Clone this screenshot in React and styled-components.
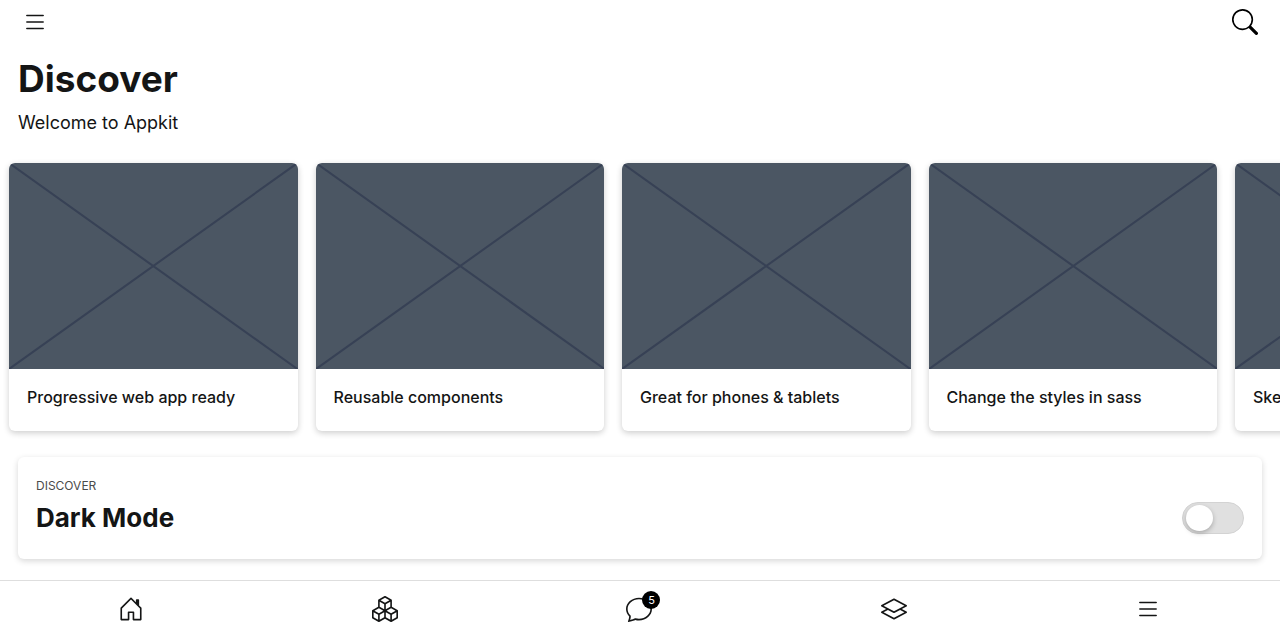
import React, { useState } from "react";
import styled, { createGlobalStyle } from "styled-components";
import { BsList, BsSearch, BsHouseDoor, BsBoxes, BsChat, BsLayers } from "react-icons/bs";

const GlobalStyle = createGlobalStyle`
  *, *::before, *::after { box-sizing: border-box; }
  body {
    margin: 0;
    background: #fff;
    color: #141515;
    font-family: Inter, "Liberation Sans", sans-serif;
  }
`;

const Page = styled.div`
  display: flex;
  flex-direction: column;
  min-height: 100vh;
`;

const Toolbar = styled.header`
  display: flex;
  align-items: center;
  justify-content: space-between;
  height: 44px;
  padding: 0 22px;
`;

const IconButton = styled.button`
  display: flex;
  padding: 0;
  border: 0;
  background: none;
  color: ${(p) => p.$color || "inherit"};
  cursor: pointer;
`;

const Intro = styled.section`
  padding: 12px 18px 0;
`;

const Title = styled.h1`
  margin: 0;
  font-size: 37px;
  line-height: 46px;
  font-weight: 700;
`;

const Subtitle = styled.p`
  margin: 8px 0 0;
  font-size: 18px;
  line-height: 26px;
`;

const Slider = styled.ul`
  display: grid;
  grid-auto-flow: column;
  grid-auto-columns: calc((100% - 72px - 45px) / 4);
  gap: 18px;
  margin: 0;
  padding: 27px 0 8px 9px;
  list-style: none;
  overflow-x: auto;
  scrollbar-width: none;
`;

const Card = styled.li`
  border-radius: 6px;
  background: #fff;
  box-shadow: 0 2px 6px rgba(0, 0, 0, 0.2);
  overflow: hidden;
`;

const Placeholder = styled.svg`
  display: block;
  width: 100%;
  aspect-ratio: 7 / 5;
  background: #4b5663;
  stroke: #374155;
  stroke-width: 2;
`;

const CardTitle = styled.h2`
  margin: 0;
  padding: 15px 18px 21px;
  font-size: 16px;
  line-height: 26px;
  font-weight: 500;
  white-space: nowrap;
`;

const Panel = styled.section`
  display: flex;
  align-items: center;
  justify-content: space-between;
  margin: 18px 18px 20px;
  padding: 18px;
  border-radius: 6px;
  background: #fff;
  box-shadow: 0 2px 6px rgba(0, 0, 0, 0.16);
`;

const PanelText = styled.div`
  display: flex;
  flex-direction: column;
  padding: 1px 0 5px;
`;

const Eyebrow = styled.span`
  font-size: 12px;
  line-height: 20px;
  color: #4b4b4b;
  text-transform: uppercase;
`;

const PanelTitle = styled.label`
  padding-top: 4px;
  font-size: 26px;
  line-height: 36px;
  font-weight: 700;
`;

const Switch = styled.input`
  appearance: none;
  display: flex;
  align-items: center;
  width: 62px;
  height: 32px;
  margin: 20px 0 0;
  padding: 0 3px;
  border: 1px solid #d3d3d3;
  border-radius: 16px;
  background: #e0e0e0;
  cursor: pointer;

  &::before {
    content: "";
    width: 27px;
    height: 26px;
    border-radius: 50%;
    background: #fff;
    box-shadow: 0 2px 5px rgba(0, 0, 0, 0.25);
  }

  &:checked {
    justify-content: flex-end;
    background: #141515;
  }
`;

const TabBar = styled.nav`
  position: sticky;
  bottom: 0;
  display: grid;
  grid-template-columns: repeat(5, 1fr);
  height: 60px;
  margin-top: auto;
  padding: 0 5px 3px 4px;
  border-top: 1px solid #dedede;
  background: #fff;
`;

const Tab = styled.a`
  display: flex;
  align-items: center;
  justify-content: center;
  color: inherit;
`;

const IconHolder = styled.span`
  position: relative;
  display: flex;
`;

const Badge = styled.span`
  position: absolute;
  top: -5px;
  right: -8px;
  width: 18px;
  height: 18px;
  border-radius: 50%;
  background: #000;
  color: #fff;
  font-size: 11px;
  line-height: 18px;
  text-align: center;
`;

const cards = [
  "Progressive web app ready",
  "Reusable components",
  "Great for phones & tablets",
  "Change the styles in sass",
  "Sketch file included",
];

const tabs = [
  { label: "Home", icon: BsHouseDoor },
  { label: "Components", icon: BsBoxes },
  { label: "Messages", icon: BsChat, badge: 5 },
  { label: "Pages", icon: BsLayers },
  { label: "More", icon: BsList },
];

export default function App() {
  const [dark, setDark] = useState(false);
  return (
    <Page>
      <GlobalStyle />
      <Toolbar>
        <IconButton type="button" aria-label="Menu">
          <BsList size={26} />
        </IconButton>
        <IconButton type="button" aria-label="Search" $color="#000">
          <BsSearch size={26} />
        </IconButton>
      </Toolbar>
      <main>
        <Intro>
          <Title>Discover</Title>
          <Subtitle>Welcome to Appkit</Subtitle>
        </Intro>
        <Slider>
          {cards.map((title) => (
            <Card key={title}>
              <Placeholder viewBox="0 0 280 200" preserveAspectRatio="none" aria-hidden="true">
                <path d="M0 0L280 200M280 0L0 200" />
              </Placeholder>
              <CardTitle>{title}</CardTitle>
            </Card>
          ))}
        </Slider>
        <Panel>
          <PanelText>
            <Eyebrow>Discover</Eyebrow>
            <PanelTitle htmlFor="dark-mode">Dark Mode</PanelTitle>
          </PanelText>
          <Switch
            id="dark-mode"
            type="checkbox"
            role="switch"
            checked={dark}
            onChange={(e) => setDark(e.target.checked)}
          />
        </Panel>
      </main>
      <TabBar aria-label="Main">
        {tabs.map(({ label, icon: Icon, badge }) => (
          <Tab key={label} href="#" aria-label={label}>
            <IconHolder>
              <Icon size={26} />
              {badge && <Badge>{badge}</Badge>}
            </IconHolder>
          </Tab>
        ))}
      </TabBar>
    </Page>
  );
}
